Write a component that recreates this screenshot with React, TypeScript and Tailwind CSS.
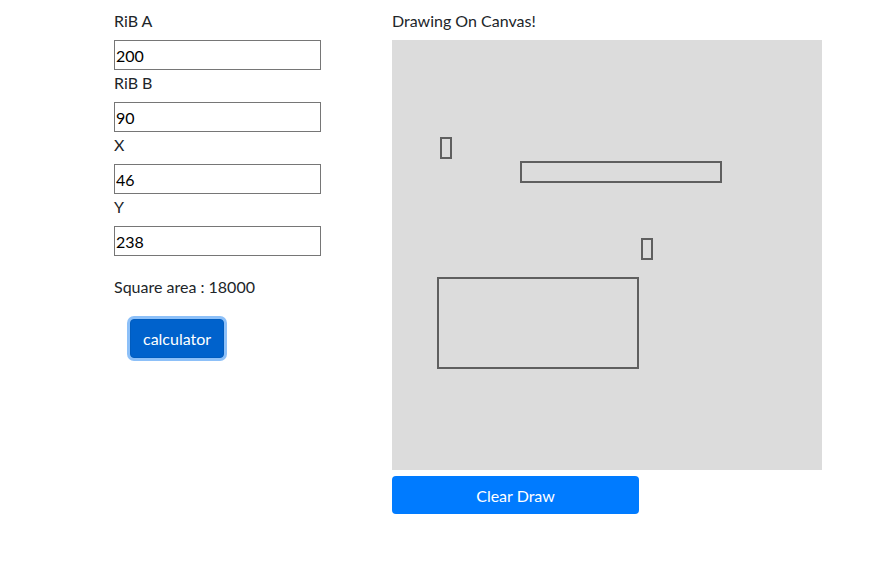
import React from "react";

const font = { fontFamily: '"Segoe UI", Lato, "Liberation Sans", sans-serif' };

function Field({ label, value }: { label: string; value: string }) {
  return (
    <div className="flex flex-col">
      <label className="h-6 mb-2 pt-[1px] text-[16px] leading-6 text-[#212529]">{label}</label>
      <input
        readOnly
        value={value}
        className="h-[30px] w-[207px] border border-[#767676] px-[1px] pt-[1px] text-[16px] text-black outline-none"
      />
    </div>
  );
}

export default function App() {
  const rects = [
    { x: 49, y: 98, w: 10, h: 20 },
    { x: 129, y: 122, w: 200, h: 20 },
    { x: 250, y: 199, w: 10, h: 20 },
    { x: 46, y: 238, w: 200, h: 90 },
  ];
  return (
    <div className="w-[896px] h-[578px] bg-white flex pl-[114px] pt-[8px]" style={font}>
      <div className="flex flex-col w-[207px]">
        <Field label="RiB A" value="200" />
        <Field label="RiB B" value="90" />
        <Field label="X" value="46" />
        <Field label="Y" value="238" />
        <p className="mt-[18px] h-6 pt-[1px] text-[16px] leading-6 text-[#212529]">Square area : 18000</p>
        <div className="mt-[21px] pl-[16px]">
          <button className="h-[39px] px-3 pt-[1px] rounded-[4px] bg-[#0062cc] text-white text-[16px] leading-6 shadow-[0_0_0_3px_#8dc0f8] border border-[#005cbf]">
            calculator
          </button>
        </div>
      </div>
      <div className="ml-[71px] flex flex-col">
        <div className="h-6 mb-2 pt-[1px] text-[16px] leading-6 text-[#212529]">Drawing On Canvas!</div>
        <div className="w-[430px] h-[430px] bg-[#dcdcdc]">
          <svg width="430" height="430" viewBox="0 0 430 430">
            {rects.map((r, i) => (
              <rect key={i} x={r.x} y={r.y} width={r.w} height={r.h} fill="none" stroke="#5f5f5f" strokeWidth={2} />
            ))}
          </svg>
        </div>
        <button className="mt-[6px] w-[247px] h-[38px] pt-[1px] rounded-[4px] bg-[#007bff] text-white text-[16px] leading-6">
          Clear Draw
        </button>
      </div>
    </div>
  );
}
